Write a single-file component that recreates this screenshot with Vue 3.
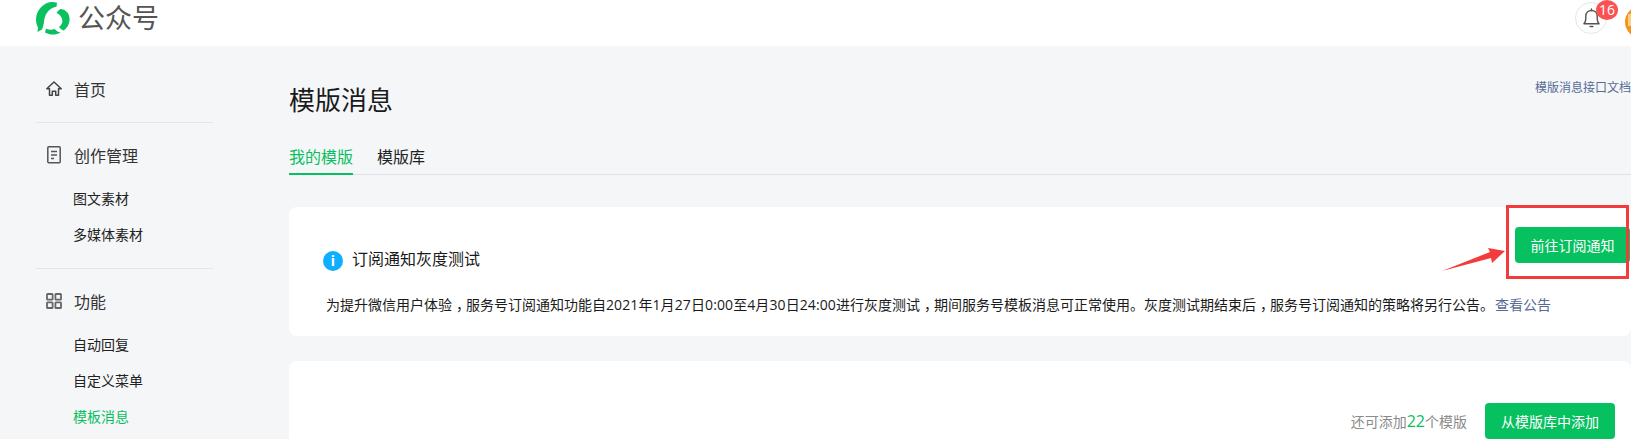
<template>
  <div class="page">
    <header class="topbar">
      <div class="brand">
        <svg class="logo" viewBox="0 0 34 34">
          <path d="M21 1.800C11-1.500.5 7 0 18c0 3 .5 6 2 8.500L1.500 31 6 28.500C7.500 25 7.800 22 8.300 19 9.300 12 14 6.500 20.500 5.800Z" fill="#09c15f"/>
          <path d="M24.500 8C29 8.500 33 11.500 33.500 17 34 22 31.500 27 27.500 29.500 25.800 28.800 24 27.500 23 25.800 25.500 24 26.800 22 26.300 19 25.800 16 23.500 13 20.500 12 21.500 10.300 23 8.800 24.500 8Z" fill="#09c15f"/>
          <path d="M10 27.800C13 28.800 16 29 18.500 28 20 29.500 22 31 24.500 31.500 19.500 34.500 13.500 34 9 31.500Z" fill="#09c15f"/>
        </svg>
        <span class="brand-name">公众号</span>
      </div>
      <div class="top-right">
        <div class="bell-wrap">
          <svg class="bell" viewBox="0 0 20 22" fill="none" stroke="#555" stroke-width="1.500">
            <path d="M2 16.500c1.600-1.300 2-3 2-5.500V8.500C4 5 6.500 2.500 10 2.500s6 2.500 6 6V11c0 2.500.4 4.200 2 5.500H2Z" stroke-linejoin="round"/>
            <path d="M8.500 19.500h3M10 1v1.500" stroke-linecap="round"/>
          </svg>
          <span class="badge">16</span>
        </div>
        <div class="avatar"><span class="avatar-mark"></span></div>
      </div>
    </header>

    <div class="body">
      <aside class="sidebar">
        <div v-for="group in menu" :key="group.title" class="menu-group">
          <div class="menu-title">
            <svg v-if="group.icon === 'home'" class="menu-icon" viewBox="0 0 16 16" fill="none" stroke="#444" stroke-width="1.500">
              <path d="M.8 7.800L8 1l7.200 6.800h-2.700v6.500H9.700v-4H6.300v4H3.500V7.800H.8Z" stroke-linejoin="round"/>
            </svg>
            <svg v-else-if="group.icon === 'doc'" class="menu-icon tall" viewBox="0 0 16 18" fill="none" stroke="#555" stroke-width="1.500">
              <rect x="1.800" y=".8" width="12.400" height="16" rx="1"/>
              <path d="M5 5.500h6M5 9h6M5 12.500h3"/>
            </svg>
            <svg v-else class="menu-icon" viewBox="0 0 16 16" fill="none" stroke="#666" stroke-width="1.800">
              <rect x="1" y="1" width="5.600" height="5.600" rx=".6"/>
              <rect x="9.400" y="1" width="5.600" height="5.600" rx=".6"/>
              <rect x="1" y="9.400" width="5.600" height="5.600" rx=".6"/>
              <rect x="9.400" y="9.400" width="5.600" height="5.600" rx=".6"/>
            </svg>
            <span>{{ group.title }}</span>
          </div>
          <a
            v-for="item in group.items"
            :key="item"
            class="menu-item"
            :class="{ active: item === '模板消息' }"
          >{{ item }}</a>
        </div>
      </aside>

      <main class="main">
        <div class="title-row">
          <h1>模版消息</h1>
          <a class="doc-link">模版消息接口文档</a>
        </div>
        <nav class="tabs">
          <a class="tab current">我的模版</a>
          <a class="tab">模版库</a>
        </nav>

        <section class="card notice">
          <div class="notice-head">
            <div class="notice-title">
              <span class="info-icon">i</span>
              <span>订阅通知灰度测试</span>
            </div>
            <button class="btn btn-go">前往订阅通知</button>
          </div>
          <p class="notice-text">为提升微信用户体验<span class="comma">，</span>服务号订阅通知功能自<span class="dates">2021年1月27日0:00至4月30日24:00</span>进行灰度测试<span class="comma">，</span>期间服务号模板消息可正常使用。灰度测试期结束后<span class="comma">，</span>服务号订阅通知的策略将另行公告。<a class="link">查看公告</a></p>
        </section>

        <section class="card list">
          <span class="quota">还可添加<em>22</em>个模版</span>
          <button class="btn">从模版库中添加</button>
        </section>
      </main>
    </div>

    <svg class="annotation" viewBox="0 0 1631 439">
      <rect x="1507.500" y="206.500" width="120" height="71" fill="none" stroke="#f33b3b" stroke-width="3"/>
      <path d="M1442 271L1490 252 1488 248 1505 251 1492 263 1491 258Z" fill="#f33b3b"/>
    </svg>
  </div>
</template>

<script setup>
const menu = [
  { title: '首页', icon: 'home', items: [] },
  { title: '创作管理', icon: 'doc', items: ['图文素材', '多媒体素材'] },
  { title: '功能', icon: 'grid', items: ['自动回复', '自定义菜单', '模板消息'] },
]
</script>

<style>
html,
body {
  margin: 0;
  height: 100%;
  overflow: hidden;
}
</style>

<style scoped>
.page {
  position: relative;
  width: 1631px;
  height: 439px;
  overflow: hidden;
  background: #f5f6f8;
  color: #1a1a1a;
  font-family: "Open Sans", "Liberation Sans", "Noto Sans CJK SC", sans-serif;
}

.topbar {
  display: flex;
  justify-content: space-between;
  height: 46px;
  padding-left: 36px;
  box-sizing: border-box;
  background: #fff;
}

.brand {
  display: flex;
  align-items: flex-start;
  gap: 8px;
}

.logo {
  width: 34px;
  height: 34px;
  margin-top: 1px;
}

.brand-name {
  font-size: 27px;
  color: #555;
  line-height: 36px;
}

.top-right {
  display: flex;
  align-items: flex-start;
  gap: 18px;
  margin-right: -26px;
}

.bell-wrap {
  position: relative;
  display: flex;
  justify-content: center;
  align-items: center;
  width: 30px;
  height: 30px;
  margin-top: 2px;
  border: 1px solid #e6e6e6;
  border-radius: 50%;
}

.bell {
  width: 19px;
  height: 21px;
}

.badge {
  position: absolute;
  top: -3px;
  left: 20px;
  width: 22px;
  height: 20px;
  border-radius: 50%;
  background: #fa5151;
  color: #fff;
  font-size: 14px;
  line-height: 20px;
  text-align: center;
}

.avatar {
  width: 32px;
  height: 32px;
  margin-top: 6px;
  border-radius: 50%;
  background: #f5931c;
}

.avatar-mark {
  display: block;
  width: 10px;
  height: 12px;
  margin: 8px 0 0 3px;
  background: #f9cf82;
}

.body {
  display: flex;
}

.sidebar {
  flex: none;
  width: 177px;
  margin-left: 36px;
  padding-top: 25px;
}

.menu-group {
  padding-bottom: 15px;
  margin-bottom: 14px;
  border-bottom: 1px solid #e4e6eb;
}

.menu-group:last-child {
  border-bottom: 0;
}

.menu-title {
  display: flex;
  align-items: center;
  gap: 12px;
  height: 36px;
  padding-left: 10px;
  font-size: 16px;
  color: #333;
}

.menu-icon {
  width: 16px;
  height: 16px;
}

.menu-icon.tall {
  height: 18px;
}

.menu-item {
  display: block;
  height: 36px;
  padding-left: 37px;
  font-size: 14px;
  line-height: 36px;
  color: #222;
}

.menu-title + .menu-item {
  margin-top: 8px;
}

.menu-item.active {
  color: #07c160;
}

.main {
  flex: 1;
  min-width: 0;
  margin-left: 76px;
}

.title-row {
  display: flex;
  justify-content: space-between;
  height: 86px;
}

h1 {
  margin: 36px 0 0;
  font-size: 26px;
  font-weight: 400;
  line-height: 36px;
}

.doc-link {
  margin-top: 32px;
  font-size: 12px;
  line-height: 20px;
  color: #576b95;
  white-space: nowrap;
}

.tabs {
  display: flex;
  gap: 24px;
  height: 43px;
  box-sizing: border-box;
  border-bottom: 1px solid #dfe1e6;
}

.tab {
  height: 43px;
  box-sizing: border-box;
  padding-top: 13px;
  font-size: 16px;
  line-height: 24px;
  color: #222;
}

.tab.current {
  border-bottom: 2px solid #07c160;
  color: #07c160;
}

.card {
  background: #fff;
  border-radius: 8px;
}

.notice {
  height: 129px;
  margin-top: 32px;
  padding: 20px 0 0 34px;
  box-sizing: border-box;
}

.notice-head {
  display: flex;
  justify-content: space-between;
  align-items: flex-start;
  height: 36px;
}

.notice-title {
  display: flex;
  align-items: center;
  gap: 9px;
  margin-top: 20px;
  font-size: 16px;
  line-height: 24px;
}

.info-icon {
  width: 20px;
  height: 20px;
  margin-top: 4px;
  border-radius: 50%;
  background: #10aeff;
  color: #fff;
  font-size: 14px;
  font-weight: 700;
  line-height: 20px;
  text-align: center;
}

.notice-text {
  margin: 32px 0 0 3px;
  font-size: 14px;
  line-height: 20px;
  white-space: nowrap;
}

.comma {
  margin-left: 4px;
  letter-spacing: -4px;
}

.dates {
  letter-spacing: .1px;
}

.link {
  margin-left: 1px;
  color: #576b95;
}

.btn {
  height: 36px;
  padding: 0 16px;
  border: 0;
  border-radius: 4px;
  background: #07c160;
  color: #fff;
  font-family: inherit;
  font-size: 14px;
}

.btn-go {
  width: 115px;
  padding: 0;
  margin-right: 1px;
}

.list {
  display: flex;
  justify-content: flex-end;
  align-items: flex-start;
  gap: 18px;
  height: 120px;
  margin-top: 25px;
  padding: 42px 16px 0 0;
  box-sizing: border-box;
}

.quota {
  margin-top: 8px;
  font-size: 14px;
  line-height: 20px;
  color: #8a8a8a;
}

.quota em {
  font-style: normal;
  font-size: 16px;
  color: #07c160;
}

.annotation {
  position: absolute;
  top: 0;
  left: 0;
  width: 1631px;
  height: 439px;
  pointer-events: none;
}
</style>
